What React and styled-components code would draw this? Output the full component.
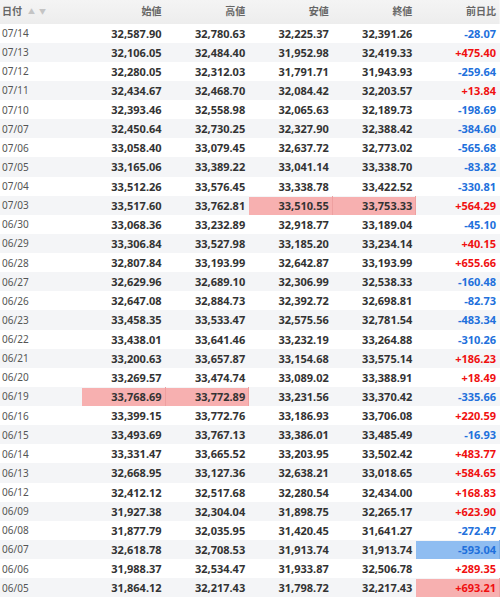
import React from "react";
import styled, { createGlobalStyle } from "styled-components";

const GlobalStyle = createGlobalStyle`
  html, body {
    margin: 0;
    padding: 0;
    background: #fff;
  }
  body {
    font-family: "Noto Sans", "Liberation Sans", "Noto Sans CJK JP", sans-serif;
  }
`;

const rows = [
  ["07/14", "32,587.90", "32,780.63", "32,225.37", "32,391.26", "-28.07"],
  ["07/13", "32,106.05", "32,484.40", "31,952.98", "32,419.33", "+475.40"],
  ["07/12", "32,280.05", "32,312.03", "31,791.71", "31,943.93", "-259.64"],
  ["07/11", "32,434.67", "32,468.70", "32,084.42", "32,203.57", "+13.84"],
  ["07/10", "32,393.46", "32,558.98", "32,065.63", "32,189.73", "-198.69"],
  ["07/07", "32,450.64", "32,730.25", "32,327.90", "32,388.42", "-384.60"],
  ["07/06", "33,058.40", "33,079.45", "32,637.72", "32,773.02", "-565.68"],
  ["07/05", "33,165.06", "33,389.22", "33,041.14", "33,338.70", "-83.82"],
  ["07/04", "33,512.26", "33,576.45", "33,338.78", "33,422.52", "-330.81"],
  ["07/03", "33,517.60", "33,762.81", "33,510.55", "33,753.33", "+564.29", { low: "red", close: "red" }],
  ["06/30", "33,068.36", "33,232.89", "32,918.77", "33,189.04", "-45.10"],
  ["06/29", "33,306.84", "33,527.98", "33,185.20", "33,234.14", "+40.15"],
  ["06/28", "32,807.84", "33,193.99", "32,642.87", "33,193.99", "+655.66"],
  ["06/27", "32,629.96", "32,689.10", "32,306.99", "32,538.33", "-160.48"],
  ["06/26", "32,647.08", "32,884.73", "32,392.72", "32,698.81", "-82.73"],
  ["06/23", "33,458.35", "33,533.47", "32,575.56", "32,781.54", "-483.34"],
  ["06/22", "33,438.01", "33,641.46", "33,232.19", "33,264.88", "-310.26"],
  ["06/21", "33,200.63", "33,657.87", "33,154.68", "33,575.14", "+186.23"],
  ["06/20", "33,269.57", "33,474.74", "33,089.02", "33,388.91", "+18.49"],
  ["06/19", "33,768.69", "33,772.89", "33,231.56", "33,370.42", "-335.66", { open: "red", high: "red" }],
  ["06/16", "33,399.15", "33,772.76", "33,186.93", "33,706.08", "+220.59"],
  ["06/15", "33,493.69", "33,767.13", "33,386.01", "33,485.49", "-16.93"],
  ["06/14", "33,331.47", "33,665.52", "33,203.95", "33,502.42", "+483.77"],
  ["06/13", "32,668.95", "33,127.36", "32,638.21", "33,018.65", "+584.65"],
  ["06/12", "32,412.12", "32,517.68", "32,280.54", "32,434.00", "+168.83"],
  ["06/09", "31,927.38", "32,304.04", "31,898.75", "32,265.17", "+623.90"],
  ["06/08", "31,877.79", "32,035.95", "31,420.45", "31,641.27", "-272.47"],
  ["06/07", "32,618.78", "32,708.53", "31,913.74", "31,913.74", "-593.04", { change: "blue" }],
  ["06/06", "31,988.37", "32,534.47", "31,933.87", "32,506.78", "+289.35"],
  ["06/05", "31,864.12", "32,217.43", "31,798.72", "32,217.43", "+693.21", { change: "red" }],
];

const highlightBg = {
  red: "#f7b0b0",
  blue: "#8fbdf1",
};
const highlightEdge = {
  red: "#eea0a0",
  blue: "#7eaee6",
};

const Table = styled.table`
  width: 500px;
  table-layout: fixed;
  border-collapse: collapse;
`;

const HeadRow = styled.tr`
  height: 23.5px;
  background: linear-gradient(#f4f4f4, #ededed);
`;

const HeadCell = styled.th`
  padding: 0 4px 2px 2px;
  text-align: ${(p) => (p.left ? "left" : "right")};
  font-size: 10px;
  font-weight: 700;
  color: #666;
  font-family: "Noto Sans CJK JP", "Noto Sans", sans-serif;
  white-space: nowrap;
`;

const SortArrows = styled.span`
  display: inline-flex;
  gap: 4px;
  margin-left: 6px;
  color: #c4c4c4;
  font-size: 7px;
  vertical-align: 1px;
`;

const Row = styled.tr`
  height: 19.14px;
  background: ${(p) => (p.striped ? "#f4f5f7" : "#fff")};
`;

const DateCell = styled.td`
  padding: 0 0 0 2px;
  font-size: 10px;
  color: #555;
  white-space: nowrap;
`;

const NumCell = styled.td`
  padding: 0 4px 0 0;
  text-align: right;
  font-size: 11px;
  font-weight: 700;
  color: ${(p) => (p.tone === "up" ? "#f01010" : p.tone === "down" ? "#2170dc" : "#333")};
  background: ${(p) => (p.mark ? highlightBg[p.mark] : "transparent")};
  box-shadow: ${(p) => (p.mark ? `inset -1px 0 0 ${highlightEdge[p.mark]}, inset 0 1px 0 ${p.striped ? "#f4f5f7" : "#fff"}` : "none")};
  white-space: nowrap;
`;

export default function App() {
  return (
    <>
      <GlobalStyle />
      <Table>
        <colgroup>
          <col style={{ width: 82 }} />
          <col />
          <col />
          <col />
          <col />
          <col />
        </colgroup>
        <thead>
          <HeadRow>
            <HeadCell left>
              日付
              <SortArrows>
                <span>▲</span>
                <span>▼</span>
              </SortArrows>
            </HeadCell>
            <HeadCell>始値</HeadCell>
            <HeadCell>高値</HeadCell>
            <HeadCell>安値</HeadCell>
            <HeadCell>終値</HeadCell>
            <HeadCell>前日比</HeadCell>
          </HeadRow>
        </thead>
        <tbody>
          {rows.map((r, index) => {
            const marks = r[6] || {};
            const striped = index % 2 === 1;
            return (
              <Row key={r[0]} striped={striped}>
                <DateCell>{r[0]}</DateCell>
                <NumCell mark={marks.open} striped={striped}>{r[1]}</NumCell>
                <NumCell mark={marks.high} striped={striped}>{r[2]}</NumCell>
                <NumCell mark={marks.low} striped={striped}>{r[3]}</NumCell>
                <NumCell mark={marks.close} striped={striped}>{r[4]}</NumCell>
                <NumCell
                  mark={marks.change}
                  striped={striped}
                  tone={r[5].startsWith("+") ? "up" : "down"}
                >
                  {r[5]}
                </NumCell>
              </Row>
            );
          })}
        </tbody>
      </Table>
    </>
  );
}
